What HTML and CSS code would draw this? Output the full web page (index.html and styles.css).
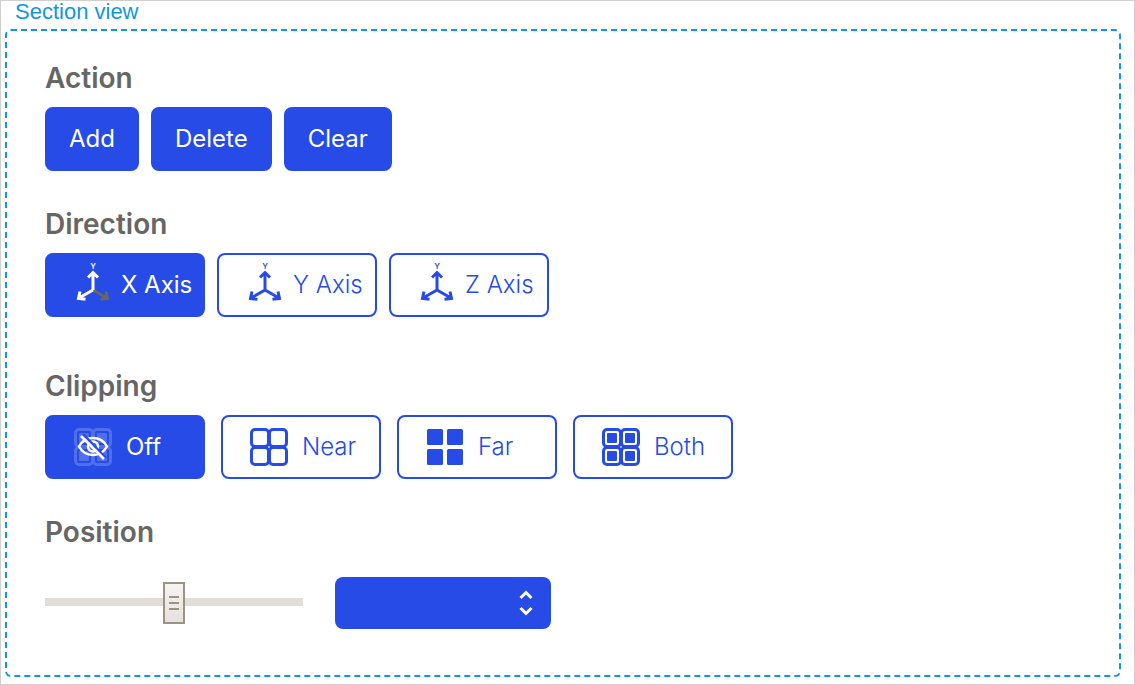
FILE: index.html
```html
<!DOCTYPE html>
<html lang="en">
<head>
<meta charset="utf-8">
<title>Section view</title>
<link rel="stylesheet" href="styles.css">
</head>
<body>
<svg class="defs" aria-hidden="true">
  <symbol id="cells" viewBox="0 0 38 38">
    <g class="cell-lines">
      <rect x="1.500" y="1.500" width="17" height="17" rx="3.500"/>
      <rect x="19.500" y="1.500" width="17" height="17" rx="3.500"/>
      <rect x="1.500" y="19.500" width="17" height="17" rx="3.500"/>
      <rect x="19.500" y="19.500" width="17" height="17" rx="3.500"/>
    </g>
  </symbol>
  <symbol id="dots" viewBox="0 0 38 38">
    <g fill="currentColor">
      <rect x="5" y="5" width="10" height="10" rx="1"/>
      <rect x="23" y="5" width="10" height="10" rx="1"/>
      <rect x="5" y="23" width="10" height="10" rx="1"/>
      <rect x="23" y="23" width="10" height="10" rx="1"/>
    </g>
  </symbol>
</svg>
<main class="page">
  <h1 class="title">Section view</h1>
  <div class="panel">
    <section class="group">
      <h2 class="heading">Action</h2>
      <div class="row">
        <button class="btn solid" type="button">Add</button>
        <button class="btn solid" type="button">Delete</button>
        <button class="btn solid" type="button">Clear</button>
      </div>
    </section>
    <section class="group direction">
      <h2 class="heading">Direction</h2>
      <div class="row">
        <button class="btn option solid x-axis" type="button" aria-pressed="true"><svg class="axes" viewBox="0 0 38 52" aria-hidden="true">
          <text class="axis-letter" x="19" y="10">Y</text>
          <path class="stroke x-arm" d="M19 31l14 8M32 32.500L33.500 39.500l-7 .8"/>
          <path class="stroke" d="M19 31V14M14 18.500l5-5 5 5M19 31L5 39M6 32.500L4.500 39.500l7 .8"/>
        </svg>X Axis</button>
        <button class="btn option" type="button" aria-pressed="false"><svg class="axes" viewBox="0 0 38 52" aria-hidden="true">
          <text class="axis-letter" x="19" y="10">Y</text>
          <path class="stroke" d="M19 31V14M14 18.500l5-5 5 5M19 31L5 39M6 32.500L4.500 39.500l7 .8M19 31l14 8M32 32.500L33.500 39.500l-7 .8"/>
        </svg>Y Axis</button>
        <button class="btn option" type="button" aria-pressed="false"><svg class="axes" viewBox="0 0 38 52" aria-hidden="true">
          <text class="axis-letter" x="19" y="10">Y</text>
          <path class="stroke" d="M19 31V14M14 18.500l5-5 5 5M19 31L5 39M6 32.500L4.500 39.500l7 .8M19 31l14 8M32 32.500L33.500 39.500l-7 .8"/>
        </svg>Z Axis</button>
      </div>
    </section>
    <section class="group">
      <h2 class="heading">Clipping</h2>
      <div class="row wide">
        <button class="btn option solid" type="button" aria-pressed="true"><svg class="cells" viewBox="0 0 38 38" aria-hidden="true">
          <g class="faint"><use href="#cells"/><use href="#dots"/></g>
          <g class="eye">
            <path d="M5 18.500C8 13 13 10 19 10s11 3 14 8.500C30 24 25 27 19 27S8 24 5 18.500z"/>
            <circle cx="19" cy="18.500" r="5"/>
            <path d="M19 18.500l-3-3"/>
            <path class="slash-gap" d="M9 6l23 24"/>
            <path d="M7 8l23 23"/>
          </g>
        </svg>Off</button>
        <button class="btn option" type="button" aria-pressed="false"><svg class="cells" viewBox="0 0 38 38" aria-hidden="true"><use href="#cells"/></svg>Near</button>
        <button class="btn option" type="button" aria-pressed="false"><svg class="cells" viewBox="0 0 38 38" fill="currentColor" aria-hidden="true">
          <rect x="1" y="1" width="16" height="16" rx="1.500"/>
          <rect x="21" y="1" width="16" height="16" rx="1.500"/>
          <rect x="1" y="21" width="16" height="16" rx="1.500"/>
          <rect x="21" y="21" width="16" height="16" rx="1.500"/>
        </svg>Far</button>
        <button class="btn option" type="button" aria-pressed="false"><svg class="cells" viewBox="0 0 38 38" aria-hidden="true"><use href="#cells"/><use href="#dots"/></svg>Both</button>
      </div>
    </section>
    <section class="group position">
      <h2 class="heading" id="position">Position</h2>
      <div class="row controls">
        <input class="slider" type="range" min="0" max="100" value="50" aria-labelledby="position">
        <div class="spinner">
          <input class="value" type="number" aria-labelledby="position">
          <div class="steps">
            <button class="step" type="button" aria-label="Increase"><svg viewBox="0 0 14 10" aria-hidden="true"><path d="M1.500 8L7 2.500 12.500 8"/></svg></button>
            <button class="step" type="button" aria-label="Decrease"><svg viewBox="0 0 14 10" aria-hidden="true"><path d="M1.500 2L7 7.500 12.500 2"/></svg></button>
          </div>
        </div>
      </div>
    </section>
  </div>
</main>
</body>
</html>
```
FILE: styles.css
```css
:root {
  --blue: #264be7;
  --accent: #1097dc;
}

* {
  box-sizing: border-box;
}

body {
  margin: 0;
  background: #fff;
  font-family: Inter, "Liberation Sans", sans-serif;
}

.defs {
  position: absolute;
  width: 0;
  height: 0;
}

.page {
  display: flex;
  flex-direction: column;
  min-height: 100vh;
  padding: 0 13px 7px 4px;
  border: 1px solid #d0d0d0;
}

.title {
  margin: 0;
  padding: 0 10px 6px;
  color: var(--accent);
  font: 400 22px/22px "Liberation Sans", Arial, sans-serif;
}

.panel {
  flex: 1;
  display: flex;
  flex-direction: column;
  gap: 36px;
  padding: 30px 38px;
  border: 2px dashed var(--accent);
  border-radius: 6px;
}

.group {
  display: flex;
  flex-direction: column;
  gap: 12px;
}

.direction {
  margin-bottom: 16px;
}

.position {
  gap: 28px;
}

.heading {
  margin: 0;
  color: #666;
  font-size: 28px;
  font-weight: 600;
  line-height: 34px;
}

.row {
  display: flex;
  flex-wrap: wrap;
  gap: 12px;
}

.wide {
  gap: 16px;
}

.controls {
  align-items: center;
  gap: 32px;
}

.btn {
  display: flex;
  align-items: center;
  height: 64px;
  padding: 0 22px;
  border: 2px solid var(--blue);
  border-radius: 8px;
  background: #fff;
  color: var(--blue);
  font: 300 24px/32px Inter, "Liberation Sans", sans-serif;
  white-space: nowrap;
}

.solid {
  background: var(--blue);
  color: #fff;
  font-weight: 400;
}

.option {
  gap: 14px;
  width: 160px;
  padding: 0 0 0 27px;
}

.direction .option {
  gap: 9px;
}

.axes {
  flex: none;
  width: 38px;
  height: 52px;
  overflow: visible;
}

.axis-letter {
  fill: currentColor;
  font: 600 8px Inter, "Liberation Sans", sans-serif;
  text-anchor: middle;
}

.stroke {
  fill: none;
  stroke: currentColor;
  stroke-width: 3;
}

.x-arm {
  stroke: #666;
}

.cells {
  flex: none;
  width: 38px;
  height: 38px;
}

.cell-lines {
  fill: none;
  stroke: currentColor;
  stroke-width: 3;
}

.faint {
  opacity: 0.2;
}

.eye {
  fill: none;
  stroke: currentColor;
  stroke-width: 2.5;
}

.slash-gap {
  stroke: var(--blue);
}

.slider {
  appearance: none;
  width: 258px;
  height: 42px;
  margin: 0;
  background: linear-gradient(#e2ddd7, #e2ddd7) 0 16px / 100% 8px no-repeat;
}

.slider::-webkit-slider-thumb {
  appearance: none;
  width: 22px;
  height: 42px;
  border: 2px solid #9a9388;
  border-radius: 0;
  background:
    linear-gradient(#9a9388, #9a9388) 50% 12px / 10px 2px no-repeat,
    linear-gradient(#9a9388, #9a9388) 50% 18px / 10px 2px no-repeat,
    linear-gradient(#9a9388, #9a9388) 50% 24px / 10px 2px no-repeat,
    linear-gradient(#f6f4f1, #e6e1db);
}

.spinner {
  display: flex;
  align-items: center;
  width: 216px;
  height: 52px;
  padding: 0 18px;
  border-radius: 8px;
  background: var(--blue);
}

.value {
  appearance: textfield;
  flex: 1;
  min-width: 0;
  padding: 0;
  border: 0;
  background: transparent;
  color: #fff;
  font: 400 24px/32px Inter, "Liberation Sans", sans-serif;
}

.value::-webkit-inner-spin-button {
  appearance: none;
}

.steps {
  display: flex;
  flex-direction: column;
  gap: 6px;
}

.step {
  display: flex;
  padding: 0;
  border: 0;
  background: none;
  color: #fff;
}

.step svg {
  width: 14px;
  height: 10px;
  fill: none;
  stroke: currentColor;
  stroke-width: 3;
}
```
